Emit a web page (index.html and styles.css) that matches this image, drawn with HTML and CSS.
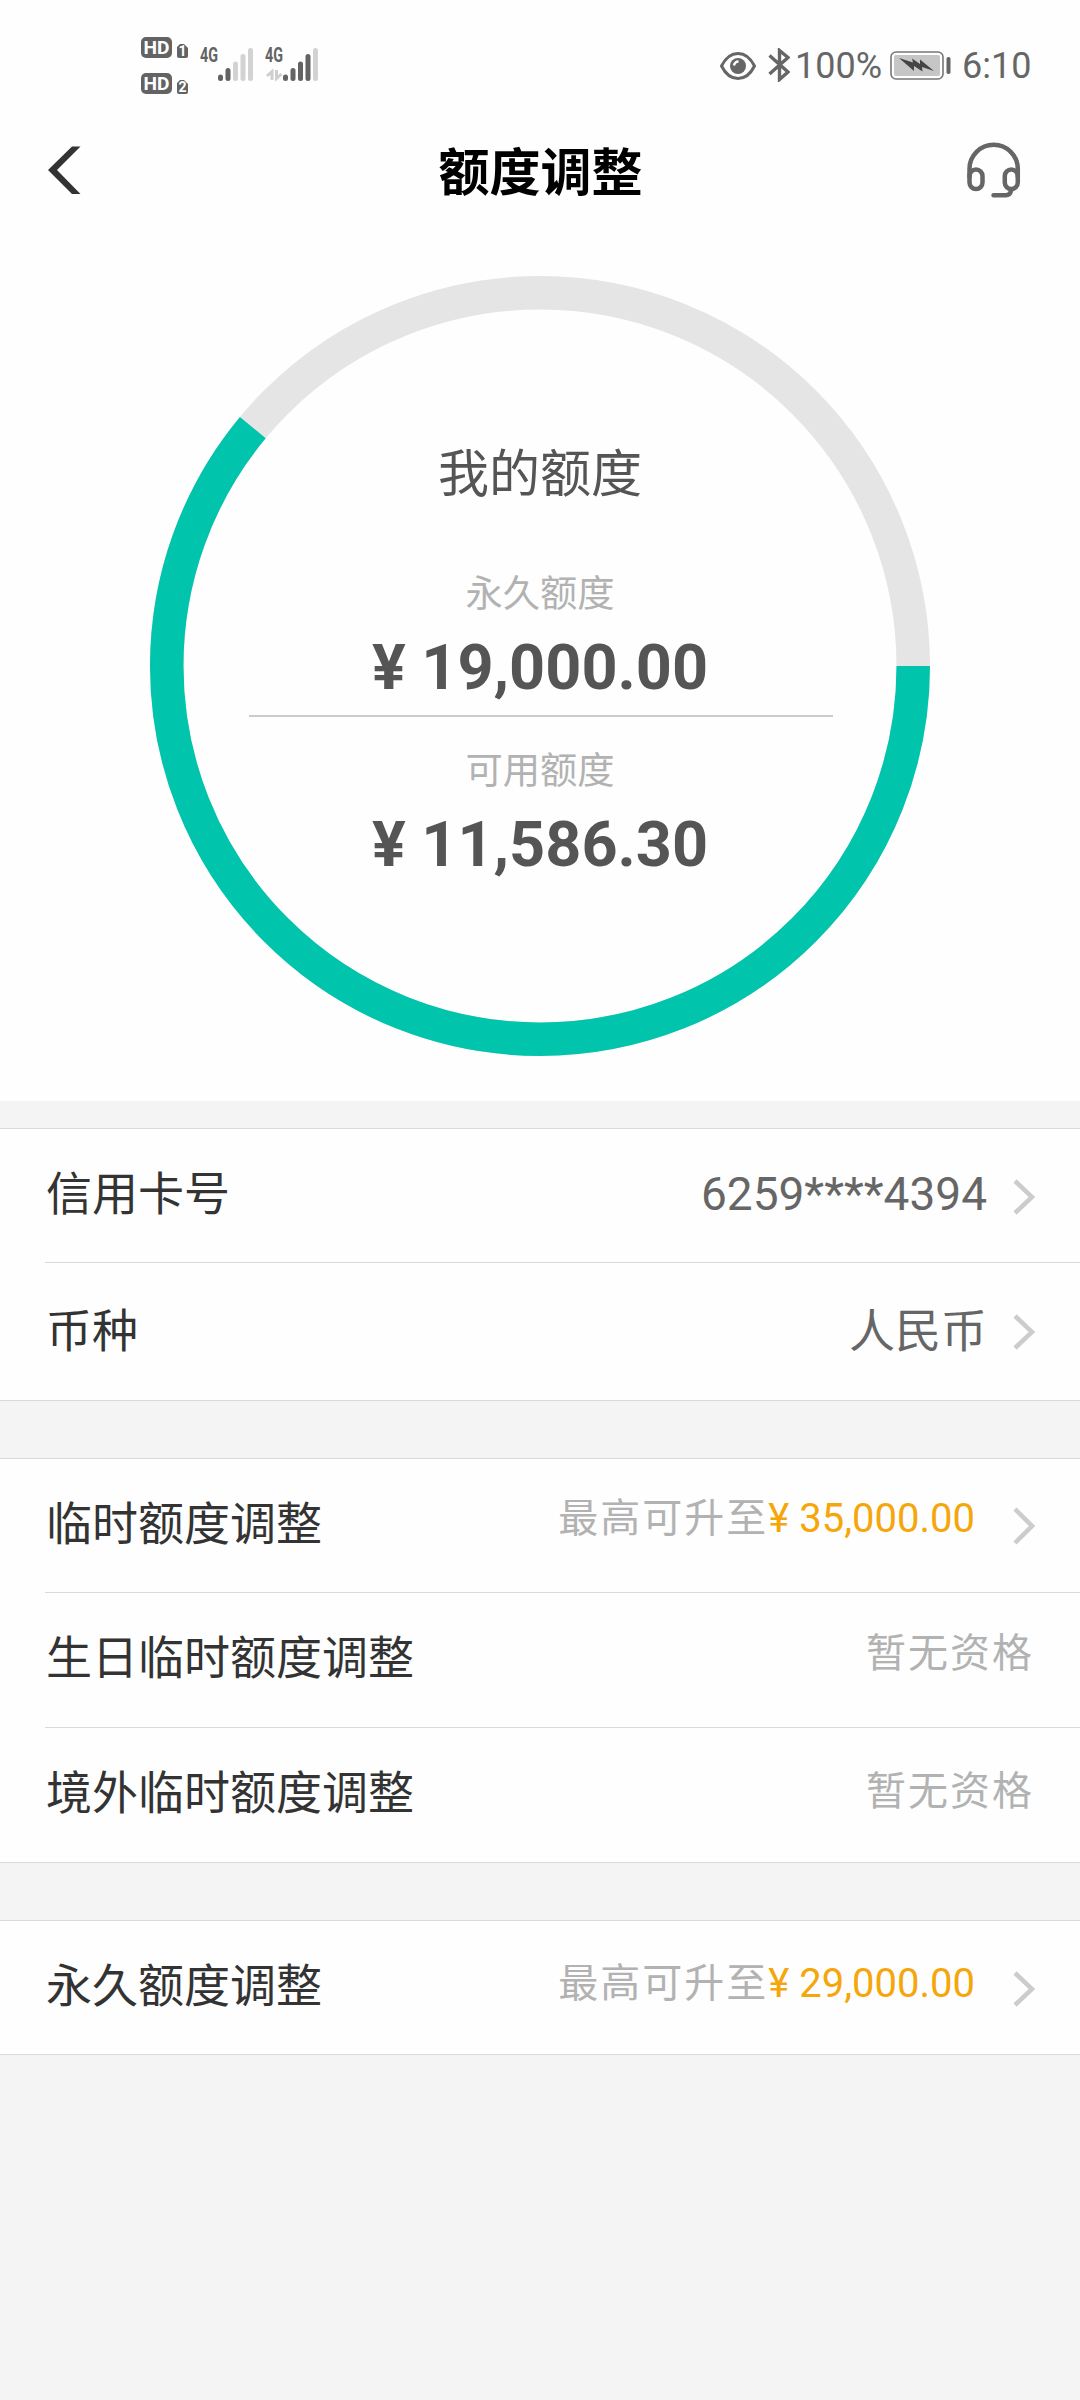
FILE: index.html
```html
<!DOCTYPE html>
<html lang="zh-CN">
<head>
<meta charset="utf-8">
<title>额度调整</title>
<link rel="stylesheet" href="styles.css">
</head>
<body>
<div class="status">
  <svg class="signals" width="190" height="70" viewBox="0 0 190 70">
    <g fill="#636363">
      <rect x="1" y="7" width="31" height="21" rx="5"/>
      <rect x="1" y="43" width="31" height="21" rx="5"/>
      <path d="M40 14h4l4 4v8a2 2 0 0 1-2 2H39a2 2 0 0 1-2-2v-9z"/>
      <path d="M40 50h4l4 4v8a2 2 0 0 1-2 2H39a2 2 0 0 1-2-2v-9z"/>
    </g>
    <g class="badge-text">
      <text x="3.5" y="24" textLength="26" lengthAdjust="spacingAndGlyphs">HD</text>
      <text x="3.5" y="60" textLength="26" lengthAdjust="spacingAndGlyphs">HD</text>
      <text class="sim" x="38.500" y="26">1</text>
      <text class="sim" x="38.500" y="62">2</text>
    </g>
    <text class="net" x="60" y="32" textLength="18" lengthAdjust="spacingAndGlyphs">4G</text>
    <text class="net" x="125" y="32" textLength="18" lengthAdjust="spacingAndGlyphs">4G</text>
    <g stroke-width="5" stroke-linecap="round">
      <path stroke="#636363" d="M80.500 47v1.500M88 40.500v8M145.500 47v1.500M153 40.500v8M160.500 34v14.500M168 26.500v22"/>
      <path stroke="#d2d2d2" d="M95.500 34v14.500M103 26.500v22M110.500 20.500v28M175.500 20.500v28"/>
    </g>
    <path d="M127 46l5-4.500V50M136.500 40v8.500l5-4.500" fill="none" stroke="#cecece" stroke-width="3"/>
  </svg>
  <div class="status-right">
    <svg class="eye" width="36" height="28" viewBox="0 0 36 28">
      <path d="M1.500 14C6 5 12 1.500 18 1.500S30 5 34.500 14C30 23 24 26.500 18 26.500S6 23 1.500 14z" fill="none" stroke="#666" stroke-width="3"/>
      <circle cx="18" cy="14" r="8" fill="#666"/>
      <path d="M14 13.500a4.500 4.500 0 0 1 4.500-4" fill="none" stroke="#fff" stroke-width="2.500"/>
    </svg>
    <svg class="bt" width="22" height="34" viewBox="0 0 22 34">
      <path d="M1.500 7.500L20 24l-8.500 7.500V2.500L20 9.500 1.500 26" fill="none" stroke="#666" stroke-width="3.400"/>
    </svg>
    <span class="pct">100%</span>
    <svg class="battery" width="61" height="29" viewBox="0 0 61 29">
      <rect x="1" y="1" width="52" height="27" rx="5" fill="#fff" stroke="#777" stroke-width="1.600"/>
      <rect x="4" y="4" width="46" height="21" rx="2" fill="#c6c6c6"/>
      <path d="M9 7l14 4.500-1-4 8 5.500V8.500L44 20l-12-4 .5 4.500-8.500-5.500v5z" fill="#444"/>
      <rect x="56.500" y="6" width="4" height="17" rx="1.800" fill="#666"/>
    </svg>
    <span class="clock">6:10</span>
  </div>
</div>
<header class="nav">
  <svg width="36" height="52" viewBox="0 0 36 52"><path d="M25 2.500h8.500L10 26l23.500 24H25L1 26z" fill="#333"/></svg>
  <h1>额度调整</h1>
  <svg class="headset" width="56" height="60" viewBox="0 0 56 60">
    <g fill="none" stroke="#666" stroke-width="4.500" stroke-linecap="round">
      <path d="M3.500 37v-8a24.150 24.150 0 0 1 48.300 0v8"/>
      <rect x="3.500" y="29.500" width="13" height="19.500" rx="6.500"/>
      <rect x="38.800" y="29.500" width="13" height="19.500" rx="6.500"/>
      <path d="M45.300 50c-.8 3.500-2.500 5.300-5.500 5.300H27.500"/>
    </g>
  </svg>
</header>
<main>
  <section class="quota">
    <div class="ring">
      <svg class="ring-chart" width="780" height="780" viewBox="0 0 780 780">
        <g fill="none" stroke-width="33.500">
          <circle cx="390" cy="390" r="373.250" stroke="#e5e5e5"/>
          <circle cx="390" cy="390" r="373.250" stroke="#00c4ac" pathLength="360" stroke-dasharray="219.700 360"/>
        </g>
      </svg>
      <div class="ring-body">
        <h2>我的额度</h2>
        <p class="cap">永久额度</p>
        <p class="sum">¥ 19,000.00</p>
        <hr>
        <p class="cap">可用额度</p>
        <p class="sum">¥ 11,586.30</p>
      </div>
    </div>
  </section>
  <section class="group">
    <div class="row"><span class="label">信用卡号</span><span class="value">6259****4394</span><svg class="chev" width="22" height="36" viewBox="0 0 22 36"><path d="M2 2l17 16L2 34"/></svg></div>
    <div class="row currency"><span class="label">币种</span><span class="value">人民币</span><svg class="chev" width="22" height="36" viewBox="0 0 22 36"><path d="M2 2l17 16L2 34"/></svg></div>
  </section>
  <section class="group">
    <div class="row temporary"><span class="label">临时额度调整</span><span class="hint">最高可升至<b>¥ 35,000.00</b></span><svg class="chev" width="22" height="38" viewBox="0 0 22 38"><path d="M2 2l17 17L2 36"/></svg></div>
    <div class="row birthday"><span class="label">生日临时额度调整</span><span class="hint none">暂无资格</span></div>
    <div class="row overseas"><span class="label">境外临时额度调整</span><span class="hint none">暂无资格</span></div>
  </section>
  <section class="group">
    <div class="row"><span class="label">永久额度调整</span><span class="hint">最高可升至<b>¥ 29,000.00</b></span><svg class="chev" width="22" height="36" viewBox="0 0 22 36"><path d="M2 2l17 16L2 34"/></svg></div>
  </section>
</main>
</body>
</html>
```
FILE: styles.css
```css
* { box-sizing: border-box; margin: 0; padding: 0; }
body {
  width: 1080px;
  min-height: 2400px;
  background: #f4f4f4;
  font-family: Roboto, "Noto Sans CJK SC", sans-serif;
}
svg { display: block; flex: none; }
.status {
  height: 120px;
  padding: 30px 50px 0 140px;
  background: #fefefe;
  display: flex;
  justify-content: space-between;
}
.badge-text text { font: bold 19px Roboto, sans-serif; fill: #fff; }
.badge-text .sim { font-size: 14px; }
.net { font: bold 20px Roboto, sans-serif; fill: #636363; }
.status-right { display: flex; height: 70px; color: #666; font-size: 36px; line-height: 73px; }
.eye { margin-top: 22px; }
.bt { margin: 18px 5px 0 12px; }
.pct { width: 95px; }
.battery { margin: 21px 11px 0 0; }
.clock { width: 68px; }
.nav {
  height: 120px;
  padding: 0 47px 20px;
  background: #fefefe;
  display: grid;
  grid-template-columns: 1fr auto 1fr;
  align-items: center;
}
.nav h1 { font-size: 51px; line-height: 60px; font-weight: 700; color: #000; padding: 8px 0 0 1px; }
.headset { justify-self: end; margin-right: 11px; }
.quota { height: 861px; padding-top: 36px; background: #fefefe; }
.ring { display: grid; width: 780px; margin: 0 auto; }
.ring-chart, .ring-body { grid-area: 1 / 1; }
.ring-body { text-align: center; padding-top: 169px; }
.ring-body h2 { font-size: 51px; line-height: 60px; font-weight: 400; color: #555; margin-bottom: 64px; }
.cap { font-size: 37.300px; line-height: 50px; color: #b2b2b2; }
.sum { font-size: 63px; line-height: 74px; font-weight: 700; color: #555; margin-top: 12px; }
.ring-body hr { width: 584px; height: 2px; border: 0; background: #ccc; margin: 10px 0 29px 99px; }
.group { background: #fefefe; border-top: 1px solid #d9d9d9; border-bottom: 1px solid #d9d9d9; margin-bottom: 57px; }
.quota + .group { margin-top: 27px; }
.row {
  display: flex;
  align-items: flex-start;
  margin-left: 45px;
  padding: 33px 45px 0 1px;
  height: 133px;
}
.row + .row { height: 135px; border-top: 1px solid #d9d9d9; }
.label { flex: 1; font-size: 46px; line-height: 64px; color: #333; }
.value { font-size: 46px; line-height: 64px; color: #666; margin-right: 26px; }
.hint { font-size: 40px; line-height: 64px; letter-spacing: 2px; color: #b2b2b2; margin: -2px 38px 0 0; }
.hint.none { margin-right: 1px; }
.hint b { font-weight: 400; letter-spacing: 0; color: #f5a60a; }
.chev { margin-top: 17px; fill: none; stroke: #ccc; stroke-width: 4.500; }
.row.currency { height: 138px; padding-top: 36px; }
.currency .chev, .temporary .chev { margin-top: 15px; }
.temporary .hint { margin-top: -5px; }
.birthday .hint { margin-top: -4px; }
.overseas .hint { margin-top: -1px; }
```
